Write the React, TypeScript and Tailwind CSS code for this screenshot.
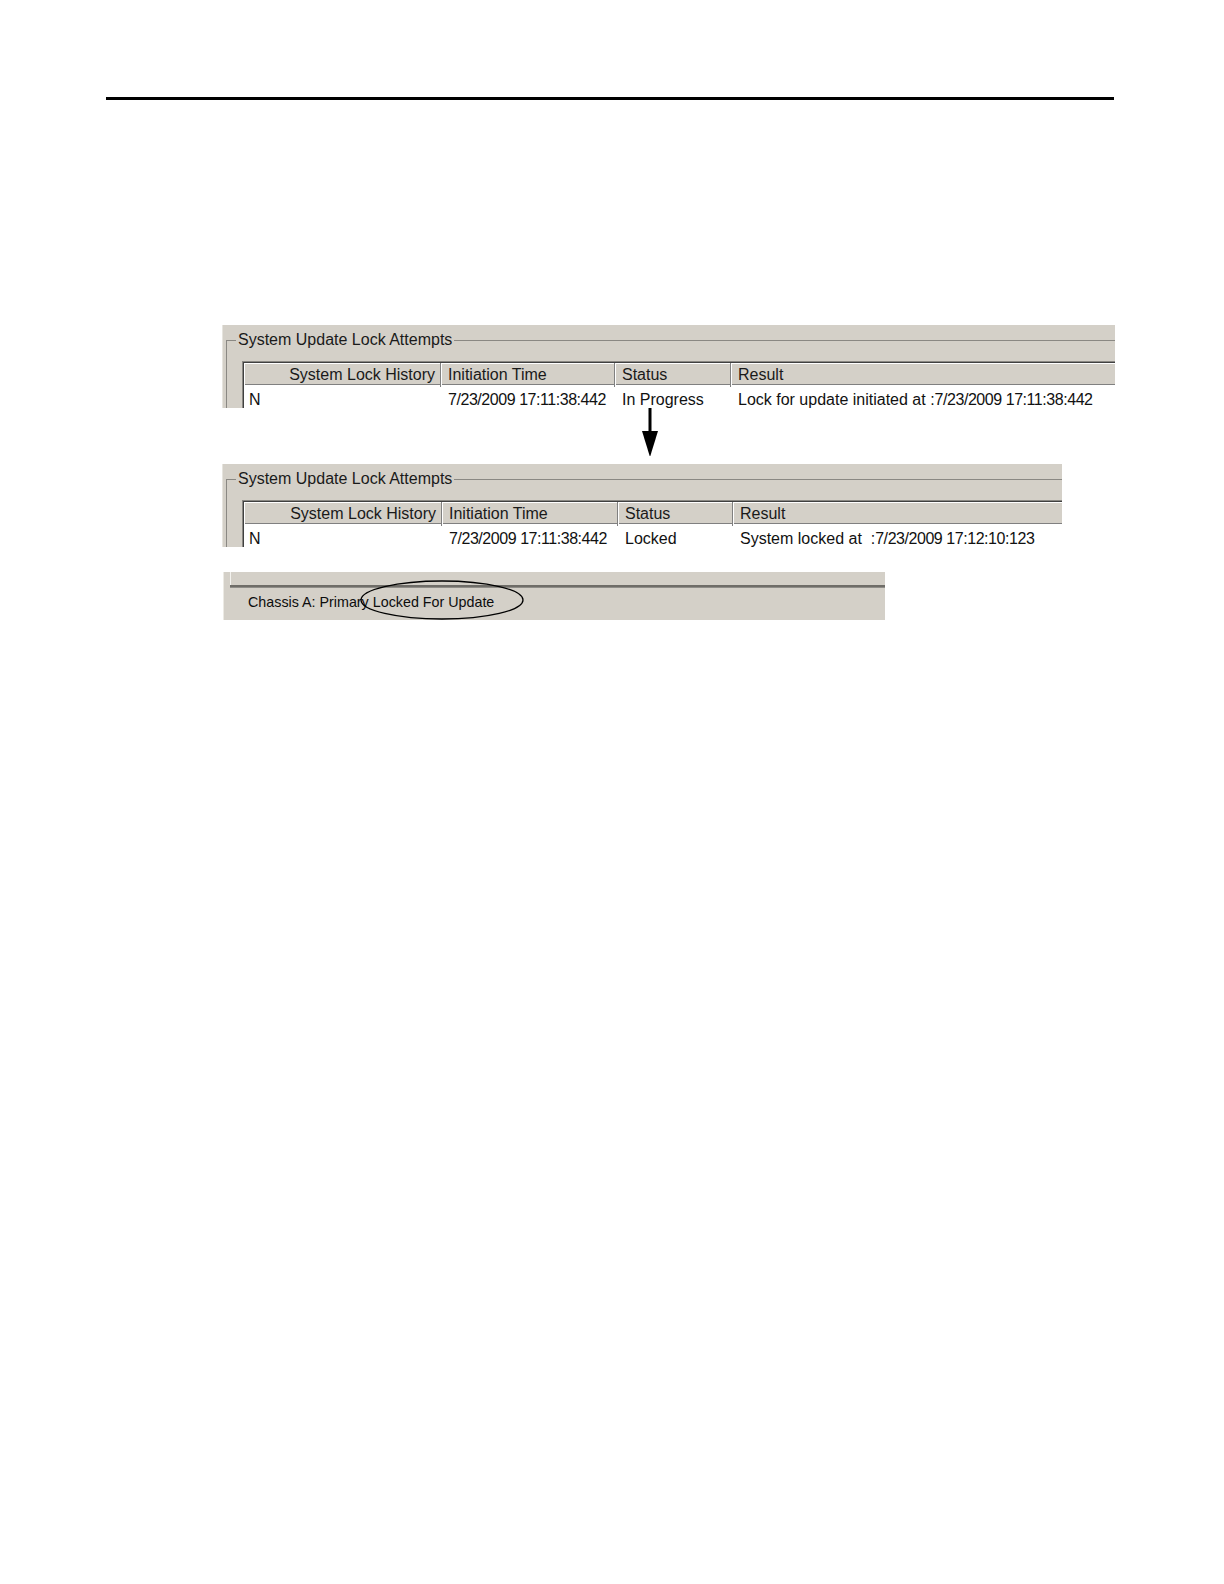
const font = { fontFamily: '"Liberation Sans", Arial, sans-serif' }

type Col = { label: string; w: number; right?: boolean }

// dates in the original bitmap font run a little narrower than Liberation's digits
const isDate = (t: string) => /^\d+\/\d+\/\d+/.test(t)

function LockPanel({ width, cols, last, row }: { width: number; cols: Col[]; last: string; row: string[] }) {
  const tpl = cols.map(c => `${c.w}px`).join(' ') + ' 1fr'
  return (
    <div
      className="bg-[#d4d0c8] h-[83px] overflow-hidden border-l border-[#e6e4de]"
      style={{ width }}
    >
      <fieldset className="ml-[3px] mt-[6px] border-t border-l border-[#8a8883]">
        <legend className="ml-[9px] px-[2px] text-[16px] leading-[18px] text-[#1a1a1a] bg-[#d4d0c8] whitespace-nowrap">
          System Update Lock Attempts
        </legend>
        <div className="ml-[15px] mt-[12px] border-t border-l border-[#8a8883]">
          <div className="border-t border-l border-[#404040]">
            <div className="grid border-b border-[#808080] h-[22px]" style={{ gridTemplateColumns: tpl }}>
              {cols.map(c => (
                <div
                  key={c.label}
                  className={`flex items-center border-r border-[#808080] shadow-[inset_1px_1px_0_#ffffff] text-[16px] text-[#1a1a1a] whitespace-nowrap ${c.right ? 'justify-end pr-[5px]' : 'pl-[7px]'}`}
                >
                  {c.label}
                </div>
              ))}
              <div className="flex items-center pl-[7px] shadow-[inset_1px_1px_0_#ffffff] text-[16px] text-[#1a1a1a] whitespace-nowrap">
                {last}
              </div>
            </div>
            <div className="grid bg-white h-[40px] pt-[6px]" style={{ gridTemplateColumns: tpl }}>
              {row.map((t, i) => (
                <div
                  key={i}
                  className={`text-[16px] leading-[18px] text-[#111] whitespace-pre ${i === 0 ? 'pl-[5px]' : 'pl-[7px]'} ${isDate(t) ? 'tracking-[-0.45px]' : ''}`}
                >
                  {i === 3 ? (
                    <>
                      {t.split(':7/')[0]}:
                      <span className="tracking-[-0.45px]">7/{t.split(':7/')[1]}</span>
                    </>
                  ) : t}
                </div>
              ))}
            </div>
          </div>
        </div>
      </fieldset>
    </div>
  )
}

export default function App() {
  return (
    <div className="w-[1224px] h-[1584px] bg-white pt-[97px]" style={font}>
      <div className="ml-[106px] w-[1008px] h-[3px] bg-black" />

      <div className="mt-[225px] ml-[222px]">
        <LockPanel
          width={893}
          cols={[
            { label: 'System Lock History', w: 197, right: true },
            { label: 'Initiation Time', w: 174 },
            { label: 'Status', w: 116 },
          ]}
          last="Result"
          row={['N', '7/23/2009 17:11:38:442', 'In Progress', 'Lock for update initiated at :7/23/2009 17:11:38:442']}
        />
      </div>

      <div className="ml-[641px] h-[48px]">
        <svg width="18" height="48" viewBox="0 0 18 48">
          <rect x="7.5" y="0" width="3" height="25" fill="#000" />
          <polygon points="1,23 17,23 9,49" fill="#000" />
        </svg>
      </div>

      <div className="mt-[8px] ml-[222px]">
        <LockPanel
          width={840}
          cols={[
            { label: 'System Lock History', w: 198, right: true },
            { label: 'Initiation Time', w: 176 },
            { label: 'Status', w: 115 },
          ]}
          last="Result"
          row={['N', '7/23/2009 17:11:38:442', 'Locked', 'System locked at  :7/23/2009 17:12:10:123']}
        />
      </div>

      <div className="relative mt-[25px] ml-[223px] w-[662px] h-[48px] bg-[#d4d0c8] border-l border-[#eceae4]">
        <div className="ml-[6px] h-[13px] border-l border-[#f4f3ef]" />
        <div className="ml-[6px] h-[3px] bg-[#6f6d68] border-b border-[#8f8d88]" />
        <div className="pl-[24px] pt-[5px] text-[14.3px] leading-[18px] text-[#0d0d0d] whitespace-pre">
          Chassis A: Primary Locked For Update
        </div>
        <svg
          className="absolute left-[136px] top-[8px] overflow-visible"
          width="164"
          height="40"
          viewBox="0 0 164 40"
        >
          <ellipse cx="82" cy="20" rx="81" ry="19" fill="none" stroke="#000" strokeWidth="1.3" />
        </svg>
      </div>
    </div>
  )
}
